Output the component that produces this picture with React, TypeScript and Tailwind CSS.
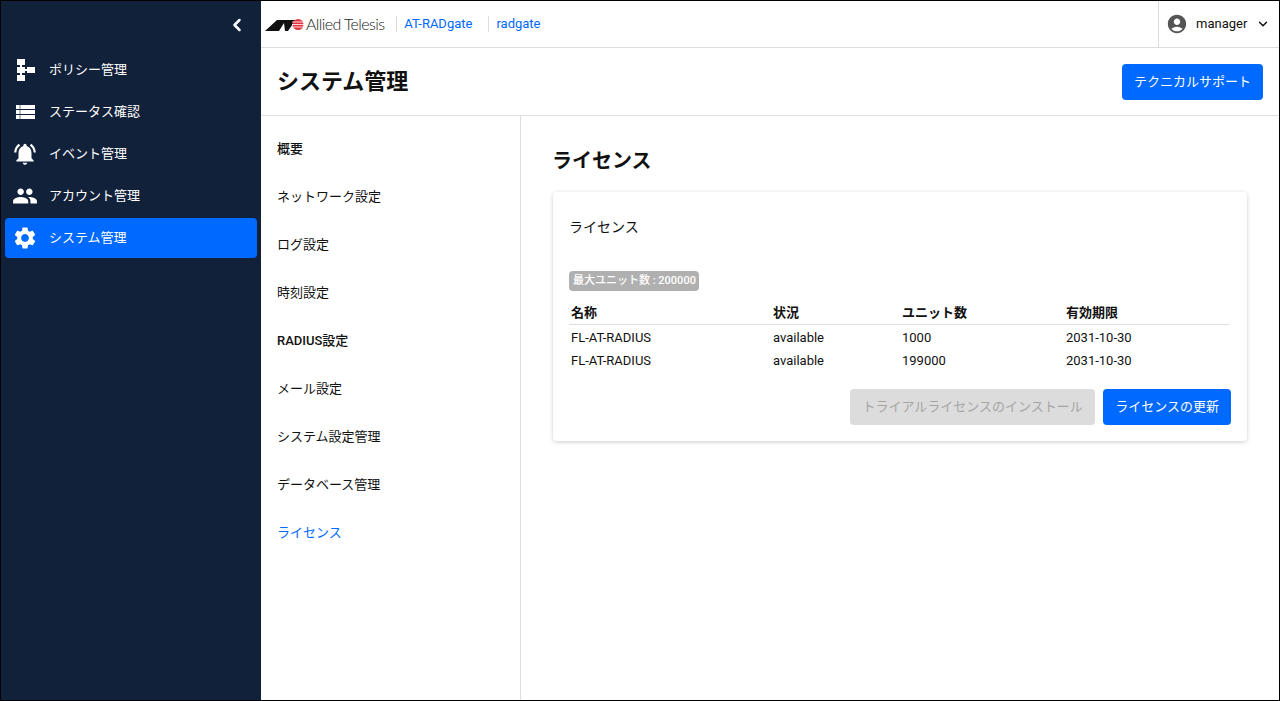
import { ChevronLeft, ChevronDown } from 'lucide-react'
import { MdPeople, MdSettings, MdNotificationsActive, MdAccountCircle } from 'react-icons/md'

const font = { fontFamily: 'Roboto, "Noto Sans CJK JP", sans-serif' }

function PolicyIcon() {
  return (
    <svg width="18" height="22" viewBox="0 0 18 22" fill="currentColor" className="ml-[2px]">
      <rect x="0" y="0" width="8" height="6" />
      <rect x="0" y="8" width="8" height="6" />
      <rect x="0" y="16" width="8" height="6" />
      <rect x="10" y="8" width="8" height="6" />
      <rect x="3" y="6" width="2" height="2" />
      <rect x="3" y="14" width="2" height="2" />
      <rect x="8" y="10" width="2" height="2" />
    </svg>
  )
}

function ListIcon() {
  return (
    <svg width="19" height="14" viewBox="0 0 19 14" fill="currentColor">
      <rect x="0" y="0" width="3.7" height="4" />
      <rect x="4.3" y="0" width="14.7" height="4" />
      <rect x="0" y="5" width="3.7" height="4" />
      <rect x="4.3" y="5" width="14.7" height="4" />
      <rect x="0" y="10" width="3.7" height="4" />
      <rect x="4.3" y="10" width="14.7" height="4" />
    </svg>
  )
}

const navItems = [
  { label: 'ポリシー管理', icon: <PolicyIcon /> },
  { label: 'ステータス確認', icon: <ListIcon /> },
  { label: 'イベント管理', icon: <MdNotificationsActive size={26} /> },
  { label: 'アカウント管理', icon: <MdPeople size={26} /> },
  { label: 'システム管理', icon: <MdSettings size={26} />, active: true },
]

const subItems = ['概要', 'ネットワーク設定', 'ログ設定', '時刻設定', 'RADIUS設定', 'メール設定', 'システム設定管理', 'データベース管理', 'ライセンス']

const licenses = [
  { name: 'FL-AT-RADIUS', status: 'available', units: '1000', expires: '2031-10-30' },
  { name: 'FL-AT-RADIUS', status: 'available', units: '199000', expires: '2031-10-30' },
]

export default function App() {
  return (
    <div style={font} className="flex h-[701px] w-[1280px] overflow-hidden border border-black bg-white text-[#111]">
      <aside className="flex w-[260px] shrink-0 flex-col bg-[#12213a] text-white">
        <div className="flex h-[49px] shrink-0 items-center justify-end pr-[14px] pb-[1px]">
          <ChevronLeft size={20} strokeWidth={3} />
        </div>
        <nav className="flex flex-col gap-[2px] px-1">
          {navItems.map(item => (
            <div key={item.label} className={`flex h-[40px] items-center rounded pb-[1px] pl-[7px] text-[13px] ${item.active ? 'bg-[#0069ff]' : ''}`}>
              <span className="flex w-[26px] justify-center">{item.icon}</span>
              <span className="ml-[11px]">{item.label}</span>
            </div>
          ))}
        </nav>
      </aside>

      <div className="flex min-w-0 flex-1 flex-col">
        <header className="flex h-[47px] shrink-0 items-center border-b border-[#ddd] text-[13px]">
          <div className="flex items-center pl-1">
            <svg width="39" height="13" viewBox="0 0 39 13" className="shrink-0">
              <path d="M0 13 L12 2 H33 L24 13 Z" fill="#111" />
              <path d="M14 13 L19 5 L20 13 Z" fill="#fff" />
              <path d="M23 13 L30 3 H31.5 L25 13 Z" fill="#fff" />
              <circle cx="33" cy="6.5" r="5.5" fill="#e4343f" />
              <path d="M27 4 H39 M27 6.5 H39 M27 9 H39" stroke="#fff" strokeWidth="0.8" />
            </svg>
            <span className="ml-[2px] text-[16px] font-light tracking-[-0.6px] text-[#222]" style={{ fontFamily: 'Lato, sans-serif' }}>
              Allied Telesis
            </span>
          </div>
          <div className="ml-3 flex h-[16px] items-center border-l border-[#ddd] pl-[7px] text-[#0069ff]">AT-RADgate</div>
          <div className="ml-4 flex h-[16px] items-center border-l border-[#ddd] pl-[7px] text-[#0069ff]">radgate</div>
          <div className="ml-auto flex h-full w-[121px] items-center border-l border-[#ddd] pl-[7px]">
            <MdAccountCircle size={22} className="text-[#555]" />
            <span className="ml-[8px] text-[13px]">manager</span>
            <ChevronDown size={14} strokeWidth={2.5} className="ml-[9px]" />
          </div>
        </header>

        <div className="flex h-[68px] shrink-0 items-center justify-between border-b border-[#ddd] pr-4 pl-4">
          <h1 className="text-[22px] font-bold">システム管理</h1>
          <button className="h-[36px] rounded bg-[#0069ff] px-3 text-[13px] text-white">テクニカルサポート</button>
        </div>

        <div className="flex min-h-0 flex-1">
          <div className="flex w-[260px] shrink-0 flex-col border-r border-[#ddd] pt-[8px] pl-4 text-[13px]">
            {subItems.map(s => (
              <div
                key={s}
                className={`flex h-[48px] items-center pt-[1px] ${s === 'ライセンス' ? 'text-[#0069ff]' : ''} ${s === '概要' || s.startsWith('RADIUS') ? 'font-medium' : ''}`}
              >
                {s}
              </div>
            ))}
          </div>

          <main className="flex-1 px-8 pt-[30px]">
            <h2 className="-ml-px text-xl leading-[30px] font-bold">ライセンス</h2>
            <section className="mt-[16px] rounded bg-white px-4 pt-[25px] pb-4 shadow-[0_1px_4px_rgba(0,0,0,0.2)]">
              <h3 className="text-sm leading-5">ライセンス</h3>
              <span className="mt-[34px] mb-[11px] inline-block rounded bg-[#b0b0b0] pr-[3px] pl-1 text-[11px] leading-5 font-medium text-white">
                最大ユニット数 : 200000
              </span>
              <table className="w-[660px] text-[13px]">
                <thead>
                  <tr className="border-b border-[#ddd] text-left">
                    <th className="w-[202px] px-[2px] leading-[22px] font-bold">名称</th>
                    <th className="w-[129px] px-[2px] font-bold">状況</th>
                    <th className="w-[164px] px-[2px] font-bold">ユニット数</th>
                    <th className="px-[2px] font-bold">有効期限</th>
                  </tr>
                </thead>
                <tbody>
                  {licenses.map(l => (
                    <tr key={l.units} className="h-[23px] leading-[21px]">
                      <td className="px-[2px] pt-[2px]">{l.name}</td>
                      <td className="px-[2px] pt-[2px]">{l.status}</td>
                      <td className="px-[2px] pt-[2px]">{l.units}</td>
                      <td className="px-[2px] pt-[2px]">{l.expires}</td>
                    </tr>
                  ))}
                </tbody>
              </table>
              <div className="mt-[18px] flex justify-end gap-2">
                <button disabled className="h-[36px] rounded bg-[#dcdcdc] px-[12.5px] text-[13px] text-[#a5a5a5]">トライアルライセンスのインストール</button>
                <button className="h-[36px] rounded bg-[#0069ff] px-3 text-[13px] text-white">ライセンスの更新</button>
              </div>
            </section>
          </main>
        </div>
      </div>
    </div>
  )
}
